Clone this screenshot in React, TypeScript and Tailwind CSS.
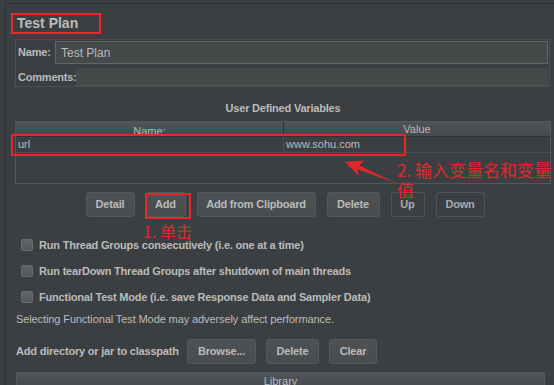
import React from "react";

const ui = "font-['Liberation_Sans',Arial,sans-serif]";
const cjk = "font-['Noto_Sans_CJK_SC',sans-serif]";

function Btn({
  label,
  width,
  disabled,
}: {
  label: string;
  width: string;
  disabled?: boolean;
}) {
  return (
    <div
      className={`flex h-[25px] items-center justify-center rounded-[3px] border text-[11px] font-bold tracking-[-0.2px] ${width} ${
        disabled
          ? "border-[#515456] bg-[#3c3f41] text-[#a9abad]"
          : "border-[#55595b] bg-gradient-to-b from-[#4e5254] to-[#484c4e] text-[#bbbbbb]"
      }`}
    >
      {label}
    </div>
  );
}

function Check({ label }: { label: string }) {
  return (
    <div className="flex h-[26px] items-center gap-[6px] pl-[6px]">
      <span className="h-[12px] w-[12px] rounded-[2px] border border-[#6a6d6f] bg-gradient-to-b from-[#626567] to-[#55585a]" />
      <span className="text-[11px] font-bold tracking-[-0.2px] text-[#bbbbbb]">
        {label}
      </span>
    </div>
  );
}

export default function App() {
  return (
    <div
      className={`relative h-[385px] w-[554px] overflow-hidden bg-[#3c3f41] pl-[5px] pt-[3px] ${ui}`}
    >
      <div className="h-[400px] border-l border-t border-[#2e3032] pl-[9px] pr-[3px]">
        {/* title */}
        <div className="h-[35px] pl-[2px] pt-[11px] text-[14px] font-bold leading-[16px] text-[#bbbbbb]">
          Test Plan
        </div>

        {/* name / comments */}
        <div className="mr-[1px] flex h-[48px] flex-col border border-[#4c4f51] pl-[2px] pr-[1px] pt-[1px]">
          <div className="flex h-[23px] items-center">
            <span className="w-[37px] text-[11px] font-bold tracking-[-0.2px] text-[#bbbbbb]">
              Name:
            </span>
            <div className="flex h-full flex-1 items-center border border-[#626566] bg-[#45494a] pl-[5px] text-[12px] text-[#bbbbbb]">
              Test Plan
            </div>
          </div>
          <div className="mt-[4px] flex h-[18px] items-center">
            <span className="w-[58px] text-[11px] font-bold tracking-[-0.2px] text-[#bbbbbb]">
              Comments:
            </span>
            <div className="h-full flex-1 border-b border-[#505354] bg-[#45494a]" />
          </div>
        </div>

        {/* user defined variables */}
        <div className="h-[34px] pt-[14px] text-center text-[11px] font-bold leading-[14px] tracking-[-0.2px] text-[#bbbbbb]">
          User Defined Variables
        </div>
        <div className="flex h-[63px] flex-col border border-[#555859]">
          <div className="flex h-[15px] overflow-hidden border-b border-[#2f3133] bg-gradient-to-b from-[#505456] to-[#46494b] text-[11px] leading-[13px] text-[#bbbbbb]">
            <div className="w-[268px] border-r border-[#2f3133] pt-[3px] text-center">
              Name:
            </div>
            <div className="flex-1 pt-[1px] text-center">Value</div>
          </div>
          <div className="flex h-[16px] border-b border-[#4b4e50] text-[11px] text-[#bbbbbb]">
            <div className="flex w-[268px] items-center border-r border-[#4b4e50] pl-[2px]">
              url
            </div>
            <div className="flex flex-1 items-center pl-[2px]">www.sohu.com</div>
          </div>
        </div>

        {/* table buttons */}
        <div className="mt-[8px] flex justify-center gap-[11px] pl-[4px]">
          <Btn label="Detail" width="w-[49px]" />
          <Btn label="Add" width="w-[40px]" />
          <Btn label="Add from Clipboard" width="w-[119px]" />
          <Btn label="Delete" width="w-[53px]" />
          <Btn label="Up" width="w-[34px]" disabled />
          <Btn label="Down" width="w-[49px]" disabled />
        </div>

        {/* options */}
        <div className="mt-[15px]">
          <Check label="Run Thread Groups consecutively (i.e. one at a time)" />
          <Check label="Run tearDown Thread Groups after shutdown of main threads" />
          <Check label="Functional Test Mode (i.e. save Response Data and Sampler Data)" />
        </div>
        <div className="flex h-[18px] items-center pl-[1px] text-[11px] tracking-[-0.1px] text-[#bbbbbb]">
          Selecting Functional Test Mode may adversely affect performance.
        </div>

        {/* classpath */}
        <div className="mt-[12px] flex h-[23px] items-center pl-[1px]">
          <span className="w-[171px] text-[11px] font-bold tracking-[-0.2px] text-[#bbbbbb]">
            Add directory or jar to classpath
          </span>
          <div className="flex gap-[10px]">
            <Btn label="Browse..." width="w-[69px]" />
            <Btn label="Delete" width="w-[53px]" />
            <Btn label="Clear" width="w-[48px]" />
          </div>
        </div>
        <div className="mr-[6px] mt-[9px] ml-[1px] h-[30px] border border-[#555859]">
          <div className="h-[16px] bg-gradient-to-b from-[#505456] to-[#46494b] pt-[2px] text-center text-[11px] leading-[13px] text-[#bbbbbb]">
            Library
          </div>
        </div>
      </div>

      {/* annotations */}
      <div className="absolute left-[11px] top-[13px] h-[21px] w-[90px] border-2 border-[#e8262b]" />
      <div className="absolute left-[11px] top-[134px] h-[22px] w-[395px] border-2 border-[#e8262b]" />
      <div className="absolute left-[145px] top-[193px] h-[26px] w-[46px] border-2 border-[#e8262b]" />
      <div
        className={`absolute left-[143px] top-[221px] text-[16px] leading-[20px] text-[#e0282c] ${cjk}`}
      >
        1. 单击
      </div>
      <div
        className={`absolute left-[397px] top-[160px] text-[17px] leading-[20px] text-[#e0282c] ${cjk}`}
      >
        2. 输入变量名和变量
        <br />值
      </div>
      <svg
        className="absolute left-[340px] top-[155px]"
        width="60"
        height="32"
        viewBox="0 0 60 32"
      >
        <polygon
          points="5,7 24.5,5.5 19,10.3 56,28 17.5,14.3 19,21"
          fill="#e0282c"
        />
      </svg>
    </div>
  );
}
